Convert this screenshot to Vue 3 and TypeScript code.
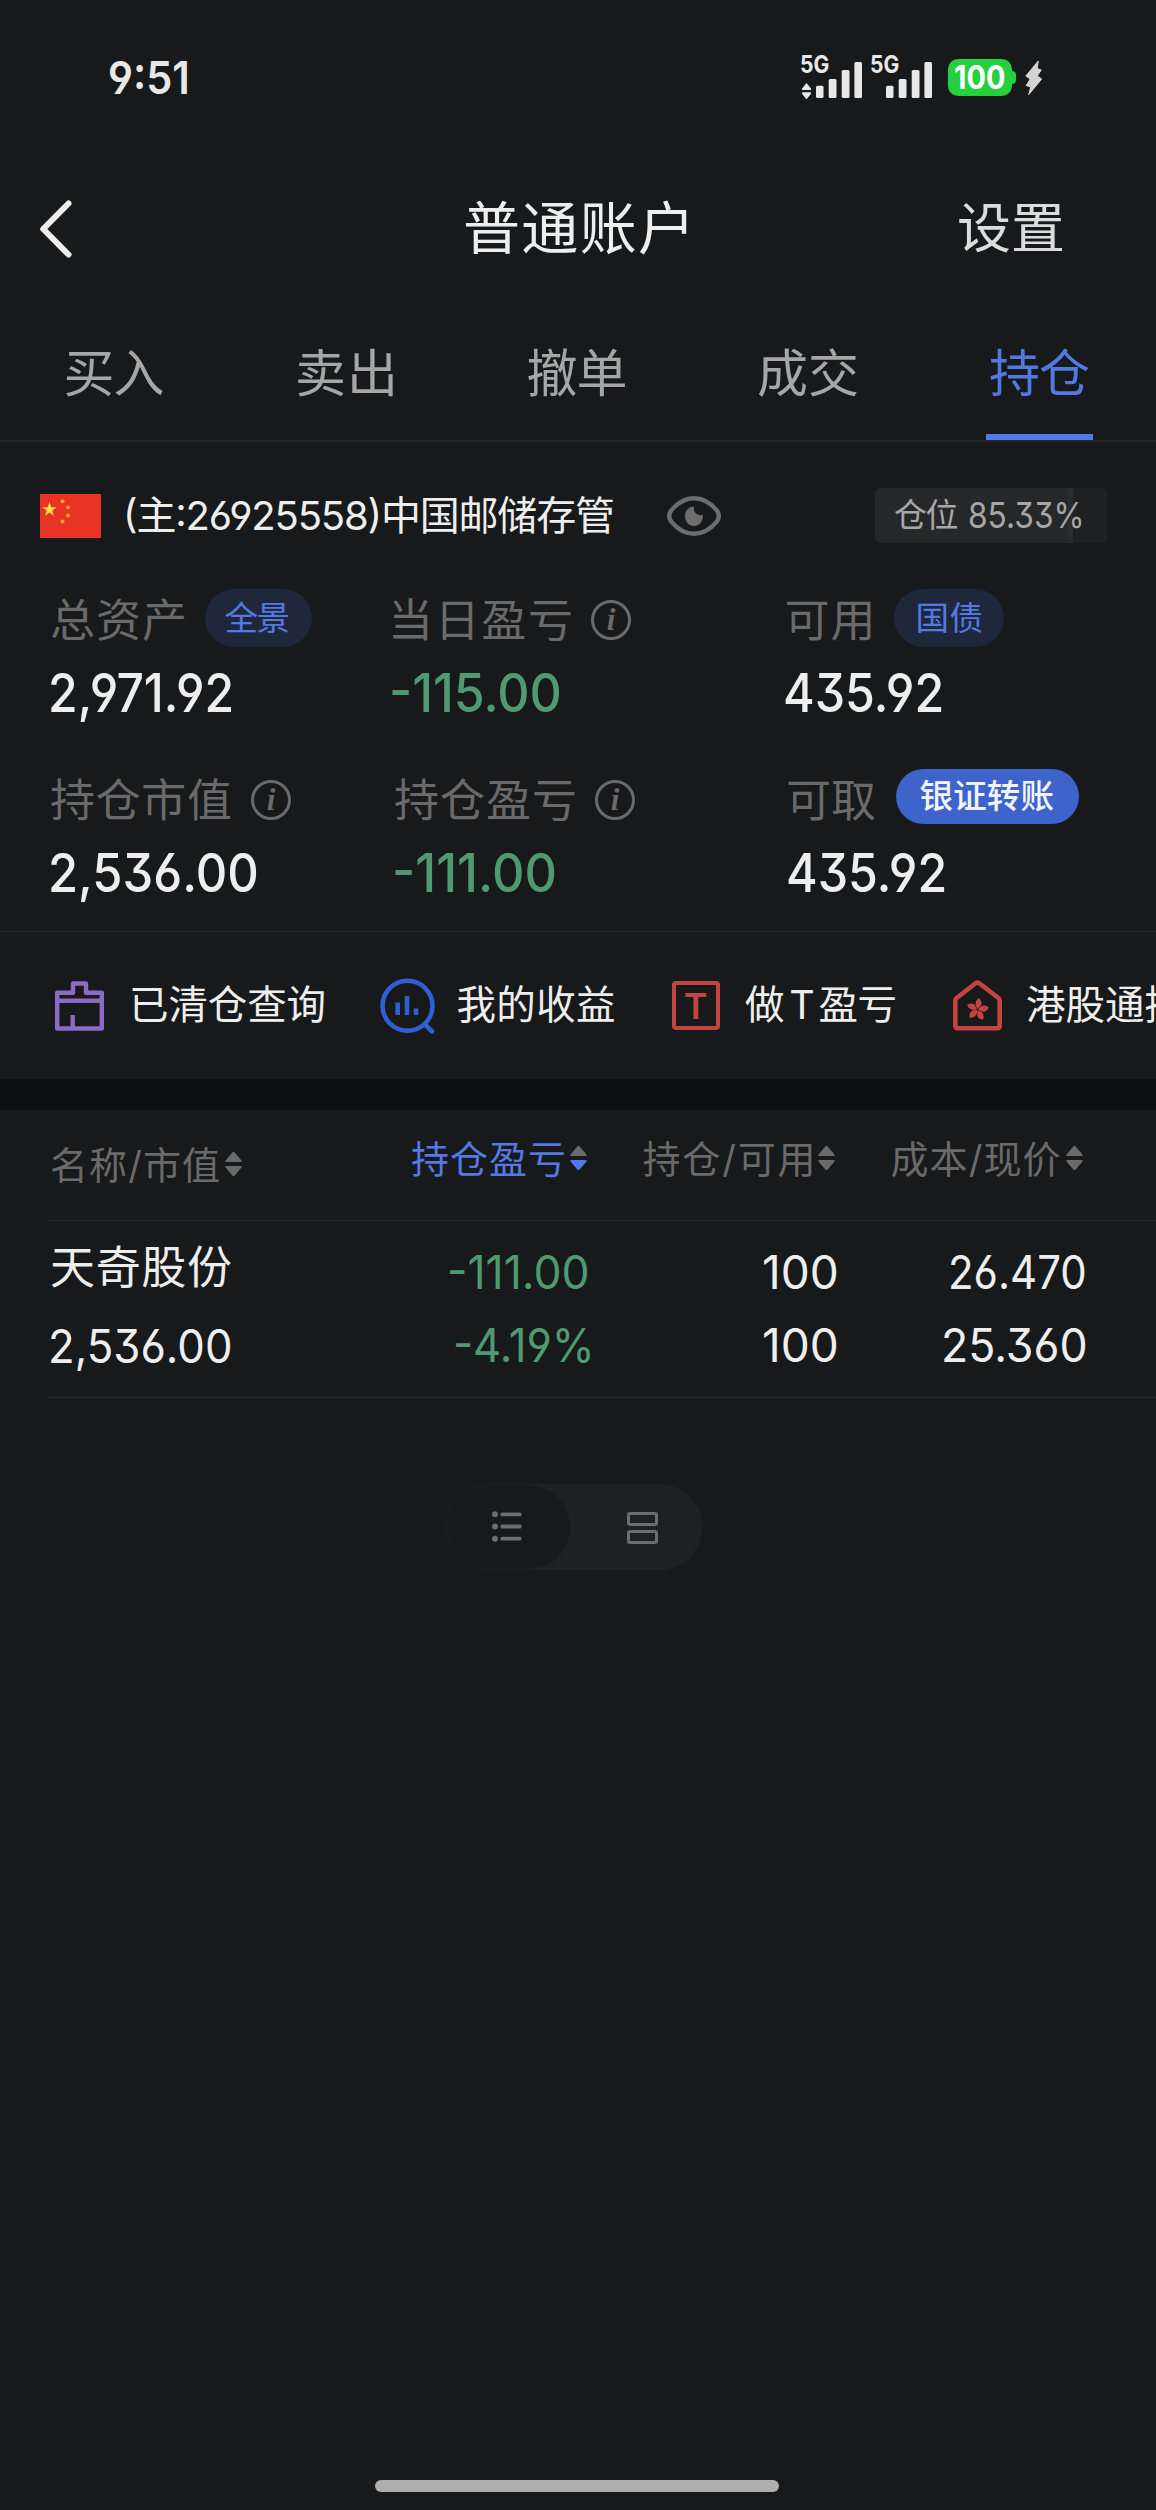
<script setup lang="ts">
import type { Directive } from 'vue'

// Tracks a label so that its visible glyphs span exactly the given width,
// and trims the side bearings so the box equals the visible glyphs.
// With the "squeeze" modifier the glyphs are narrowed instead of being tracked.
const ctx = document.createElement('canvas').getContext('2d')!
const vFit: Directive<HTMLElement, number, 'squeeze'> = {
  mounted(el, { value, modifiers }) {
    const text = el.textContent ?? ''
    const chars = Array.from(text)
    const cs = getComputedStyle(el)
    ctx.font = `${cs.fontStyle} ${cs.fontWeight} ${cs.fontSize} ${cs.fontFamily}`
    const lsb = -ctx.measureText(chars[0]).actualBoundingBoxLeft
    const last = ctx.measureText(chars[chars.length - 1])
    const rsb = last.width - last.actualBoundingBoxRight
    const advance = el.getBoundingClientRect().width
    const ink = advance - lsb - rsb
    if (modifiers.squeeze) {
      const k = value / ink
      el.style.transformOrigin = '0 50%'
      el.style.transform = `scaleX(${k})`
      el.style.marginLeft = `${-lsb * k}px`
      el.style.marginRight = `${value - advance + lsb * k}px`
      return
    }
    const gap = (value - ink) / Math.max(1, chars.length - 1)
    el.style.letterSpacing = `${gap}px`
    el.style.marginLeft = `${-lsb}px`
    el.style.marginRight = `${-(rsb + gap)}px`
  },
}

interface Cell {
  label: string
  labelWidth: number
  value: string
  valueWidth: number
  down?: boolean
  info?: boolean
  pill?: { text: string; width: number; kind: string }
}

const tabs = [
  { text: '买入', width: 98 },
  { text: '卖出', width: 95 },
  { text: '撤单', width: 98 },
  { text: '成交', width: 99 },
  { text: '持仓', width: 99, active: true },
]

const summary: Cell[][] = [
  [
    { label: '总资产', labelWidth: 133, value: '2,971.92', valueWidth: 181, pill: { text: '全景', width: 64, kind: 'first' } },
    { label: '当日盈亏', labelWidth: 178, value: '-115.00', valueWidth: 168, down: true, info: true },
    { label: '可用', labelWidth: 84, value: '435.92', valueWidth: 157, pill: { text: '国债', width: 64, kind: 'bond' } },
  ],
  [
    { label: '持仓市值', labelWidth: 180, value: '2,536.00', valueWidth: 206, info: true },
    { label: '持仓盈亏', labelWidth: 180, value: '-111.00', valueWidth: 160, down: true, info: true },
    { label: '可取', labelWidth: 87, value: '435.92', valueWidth: 157, pill: { text: '银证转账', width: 133, kind: 'solid' } },
  ],
]

const columns = [
  { key: 'name', text: '名称/市值', width: 168 },
  { key: 'profit', text: '持仓盈亏', width: 152, active: true },
  { key: 'amount', text: '持仓/可用', width: 168 },
  { key: 'price', text: '成本/现价', width: 168 },
]

const holding = [
  { key: 'profit', top: '-111.00', topWidth: 137.5, bottom: '-4.19%', bottomWidth: 134.5 },
  { key: 'amount', top: '100', topWidth: 72.5, bottom: '100', bottomWidth: 72.5 },
  { key: 'price', top: '26.470', topWidth: 134, bottom: '25.360', bottomWidth: 141.5 },
]
</script>

<template>
  <div class="screen">
    <div class="status">
      <span v-fit.squeeze="77" class="time">9:51</span>
      <div class="signal first">
        <span v-fit.squeeze="27.5" class="net">5G</span>
        <svg width="62" height="42" viewBox="0 0 62 42" fill="#e8e8e8">
          <path d="M6.500 26l4.500 5.500q.5 1.500-1 1.500h-7q-1.500 0-1-1.500zM6.500 42.300l4.500-5.500q.5-1.500-1-1.500h-7q-1.500 0-1 1.500z" />
          <rect x="16" y="28.700" width="7.500" height="12.300" rx="1.500" />
          <rect x="28.700" y="22" width="7.800" height="19" rx="1.500" />
          <rect x="41.700" y="13" width="7.800" height="28" rx="1.500" />
          <rect x="54.400" y="5" width="7.600" height="36" rx="1.500" />
        </svg>
      </div>
      <div class="signal">
        <span v-fit.squeeze="27.5" class="net">5G</span>
        <svg width="62" height="42" viewBox="0 0 62 42" fill="#e8e8e8">
          <rect x="16" y="28.700" width="7.500" height="12.300" rx="1.500" />
          <rect x="28.700" y="22" width="7.800" height="19" rx="1.500" />
          <rect x="41.700" y="13" width="7.800" height="28" rx="1.500" />
          <rect x="54.400" y="5" width="7.600" height="36" rx="1.500" />
        </svg>
      </div>
      <div class="battery"><span v-fit.squeeze="50">100</span></div>
      <i class="nub"></i>
      <svg class="bolt" width="18" height="36" viewBox="0 0 18 36" fill="#d4d4d4" stroke="#d4d4d4" stroke-width="1" stroke-linejoin="round">
        <path d="M13.300 1L.8 16l4.400 3L1.200 25.500l4.500 1.500L3.700 34.700 16.700 19l-4.500-3L16.200 10l-4-1.500z" />
      </svg>
    </div>

    <header class="bar">
      <svg width="34" height="60" viewBox="0 0 34 60" fill="none" stroke="#eeeeee" stroke-width="6" stroke-linecap="round" stroke-linejoin="round">
        <path d="M28.500 4.500L3.200 30 28.500 55.500" />
      </svg>
      <span v-fit="222" class="title">普通账户</span>
      <span v-fit="104" class="settings">设置</span>
    </header>

    <nav class="tabs">
      <div v-for="t in tabs" :key="t.text" class="tab" :class="{ active: t.active }">
        <span v-fit="t.width">{{ t.text }}</span>
      </div>
    </nav>

    <section class="account">
      <svg class="flag" width="61" height="44" viewBox="0 0 61 44">
        <rect width="61" height="44" fill="#e93324" />
        <path fill="#f6e24b" d="M9.500 8l1.700 5.200h5.400l-4.400 3.200 1.700 5.300-4.400-3.300-4.400 3.300 1.700-5.300-4.400-3.200h5.400z" />
        <g fill="#f0a63a"><circle cx="22.500" cy="7.300" r="2" /><circle cx="28" cy="13.300" r="1.900" /><circle cx="28" cy="21.500" r="1.900" /><circle cx="22.500" cy="27.500" r="2" /></g>
      </svg>
      <span v-fit="486" class="number">(主:26925558)中国邮储存管</span>
      <svg class="eye" width="54" height="40" viewBox="0 0 54 40">
        <path d="M27 2.200C16.500 2.200 9.500 8 4.200 14.300Q.2 20 4.200 25.700C9.500 32 16.500 37.800 27 37.800S44.500 32 49.800 25.700Q53.800 20 49.800 14.300C44.500 8 37.500 2.200 27 2.200z" fill="none" stroke="#6d6d6d" stroke-width="4.400" />
        <path d="M27 10.500c-1 6 3 9.500 9 8.500 0 6.500-3.500 11-9 11s-9-4.500-9-10 4-9.500 9-9.500z" fill="#6d6d6d" />
      </svg>
      <div class="ratio"><span v-fit="62.5" class="ratio-label">仓位</span><span v-fit.squeeze="111.5">85.33%</span></div>
    </section>

    <section class="summary">
      <div v-for="(row, r) in summary" :key="r" class="sum-row" :class="'r' + r">
        <div v-for="c in row" :key="c.label" class="cell">
          <div class="cell-head">
            <span v-fit="c.labelWidth" class="label">{{ c.label }}</span>
            <i v-if="c.info" class="info">i</i>
            <span v-if="c.pill" class="pill" :class="c.pill.kind"><span v-fit="c.pill.width">{{ c.pill.text }}</span></span>
          </div>
          <div class="value" :class="{ down: c.down }"><span v-fit.squeeze="c.valueWidth">{{ c.value }}</span></div>
        </div>
      </div>
    </section>

    <section class="quick">
      <svg width="49" height="50" viewBox="0 0 49 50" fill="none" stroke="#8a6bc8" stroke-width="4.400" stroke-linejoin="round">
        <path d="M2.200 11.700H18V2.500h13v9.200h15.800V47.500H2.200zM2.200 19.800h44.600M17.700 34v13" />
      </svg>
      <span v-fit="192.5" class="q1">已清仓查询</span>
      <svg class="i2" width="56" height="56" viewBox="0 0 56 56" fill="none" stroke="#2f5fd0" stroke-width="4.600">
        <circle cx="27.500" cy="27.700" r="25" />
        <path d="M45.500 47l6.500 6.500" stroke-linecap="round" />
        <path d="M17.700 24.500V37M27 18v19M36 30.500V37" />
      </svg>
      <span v-fit="156.5" class="q2">我的收益</span>
      <div class="t-box">T</div>
      <span class="q3"><span v-fit="36">做</span><span v-fit="23" class="tee">T</span><span v-fit="76">盈亏</span></span>
      <svg class="i4" width="49" height="51" viewBox="0 0 49 51" fill="none" stroke="#c4453f" stroke-width="4.600" stroke-linejoin="round">
        <path d="M2.300 20.500Q2.300 19 3.600 18L22.600 3.300Q24.500 1.800 26.400 3.300L45.400 18Q46.700 19 46.700 20.500V45.500Q46.700 48.200 44 48.200H5Q2.300 48.200 2.300 45.500z" />
        <g fill="#c4453f" stroke="none" transform="translate(24.500 29.500)">
          <path v-for="n in 5" :key="n" :transform="`rotate(${n * 72 - 62})`" d="M0-.5C-3.500-3.500-4.300-8-.5-11.500 .5-10.300 3.200-9 3-6 2.800-3.500 1-2.800 0-.5z" />
        </g>
      </svg>
      <span v-fit="196" class="q4">港股通持仓</span>
    </section>

    <div class="band"></div>

    <section class="table">
      <div class="thead">
        <div v-for="c in columns" :key="c.key" class="th" :class="[c.key, { active: c.active }]">
          <span v-fit="c.width">{{ c.text }}</span>
          <svg width="17" height="26" viewBox="0 0 17 26">
            <path class="up" d="M7.300 1.500q1.200-1.500 2.400 0l6.800 8q.8 1.500-.8 1.500H1.300q-1.600 0-.8-1.500z" />
            <path class="dn" d="M7.300 24.500q1.200 1.500 2.400 0l6.800-8q.8-1.500-.8-1.500H1.300q-1.600 0-.8 1.500z" />
          </svg>
        </div>
      </div>
      <div class="trow">
        <div class="td name">
          <div class="top"><span v-fit="180">天奇股份</span></div>
          <div class="bottom"><span v-fit.squeeze="179.5">2,536.00</span></div>
        </div>
        <div v-for="h in holding" :key="h.key" class="td" :class="h.key">
          <div class="top"><span v-fit.squeeze="h.topWidth">{{ h.top }}</span></div>
          <div class="bottom"><span v-fit.squeeze="h.bottomWidth">{{ h.bottom }}</span></div>
        </div>
      </div>
    </section>

    <div class="toggle">
      <div class="opt on">
        <svg width="30" height="31" viewBox="0 0 30 31" fill="#6d6d6d">
          <circle cx="3" cy="3.200" r="3" /><circle cx="3" cy="15.500" r="3" /><circle cx="3" cy="27.800" r="3" />
          <rect x="8.500" y="1.400" width="21" height="3.800" rx="1.500" /><rect x="8.500" y="13.600" width="21" height="3.800" rx="1.500" /><rect x="8.500" y="25.800" width="21" height="3.800" rx="1.500" />
        </svg>
      </div>
      <div class="opt">
        <svg width="31" height="32" viewBox="0 0 31 32" fill="none" stroke="#6d6d6d" stroke-width="3">
          <rect x="1.500" y="1.500" width="28" height="11" rx="1.500" /><rect x="1.500" y="19.500" width="28" height="11" rx="1.500" />
        </svg>
      </div>
    </div>

    <div class="home"></div>
  </div>
</template>

<style>
body {
  background: #17191a;
  overflow: hidden;
}
</style>

<style scoped>
.screen {
  box-sizing: border-box;
  width: 1156px;
  height: 2510px;
  overflow: hidden;
  display: flex;
  flex-direction: column;
  background: #17191a;
  color: #eeeeee;
  font-family: 'Inter', 'Noto Sans CJK SC', sans-serif;
  font-feature-settings: 'cv03', 'cv04', 'cv09', 'case';
  line-height: 1;
  white-space: nowrap;
}
.screen > * { flex: none; }
span { display: inline-block; flex: none; }
svg { display: block; flex: none; }

.status { display: flex; align-items: center; height: 154px; padding-left: 110px; box-sizing: border-box; padding-top: 1px; }
.time { font-size: 45.500px; font-weight: 600; color: #e8e8e8; }
.signal { display: grid; width: 62px; height: 42px; margin-left: 8px; }
.signal.first { margin-left: 613px; }
.signal > * { grid-area: 1 / 1; }
.net { justify-self: start; font-size: 24px; font-weight: 700; color: #e8e8e8; margin-top: -4px; position: relative; left: 1px; }
.battery { display: flex; align-items: center; justify-content: center; width: 64px; height: 37px; margin-left: 16px; border-radius: 10px; background: #25cf3e; color: #fff; font-size: 32px; font-weight: 700; }
.nub { width: 4px; height: 13px; border-radius: 0 5px 5px 0; background: #25cf3e; }
.bolt { margin-left: 8.500px; }

.bar { display: flex; align-items: center; height: 146px; padding-left: 40px; }
.bar svg { margin-top: 3px; }
.title { font-size: 57px; position: relative; left: 391px; top: 1px; }
.settings { font-size: 54px; color: #dcdcdc; position: relative; left: 663px; top: 2px; }

.tabs { display: grid; grid-template-columns: repeat(5, 1fr); height: 140px; padding-right: 1px; border-bottom: 2px solid #262729; font-size: 51px; color: #a6a6a6; }
.tab { display: grid; grid-template: 134px 6px / 100%; align-items: center; justify-items: center; padding-right: 2px; }
.tab span { margin-top: 13px; }
.tab.active { padding-right: 0; color: #5079e4; }
.tab.active::after { content: ''; width: 107px; height: 6px; background: #5079ea; }

.account { display: flex; align-items: center; height: 147px; padding-left: 40px; }
.number { font-size: 40px; }
.flag { margin-right: 26px; }
.eye { margin: 0 154.500px 0 53.500px; }
.ratio { display: flex; align-items: center; box-sizing: border-box; width: 232px; height: 55px; border-radius: 6px; padding-left: 20px; gap: 12.500px; background: linear-gradient(90deg, #262729 0 193px, #2a2b2c 193px 198px, #1f2022 198px); color: #a6a6a6; font-size: 35.500px; }
.ratio-label { font-size: 33px; }

.summary { padding-left: 51px; height: 342px; border-bottom: 1px solid #262729; }
.sum-row { display: grid; }
.r0 { grid-template-columns: 342px 393.500px 1fr; margin-bottom: 30px; }
.r1 { grid-template-columns: 344px 393px 1fr; }
.cell-head { display: flex; align-items: center; height: 58px; }
.label { font-size: 45px; color: #6a6a6a; position: relative; top: 2.500px; }
.info { box-sizing: border-box; width: 40px; height: 40px; margin: 4px 0 0 20px; border: 3px solid #6a6a6a; border-radius: 50%; color: #6a6a6a; font: italic bold 31px/33px 'Liberation Serif', serif; text-align: center; }
.pill { display: flex; align-items: center; justify-content: center; box-sizing: border-box; width: 107px; height: 58px; margin-left: 21px; padding-right: 4px; border-radius: 29px; background: #1f273a; color: #5379e2; font-size: 33.500px; }
.pill > span { position: relative; top: 1px; }
.pill.bond { width: 110px; margin-left: 23px; padding: 0 0 0 2px; }
.pill.solid { width: 183px; height: 55px; margin: -3px 0 0 21px; padding-right: 1px; background: #3e63ca; color: #f2f5ff; font-weight: 500; }
.pill.solid > span { top: 0; }
.value { display: flex; align-items: center; height: 92px; font-size: 53px; font-weight: 500; }
.r0 .cell + .cell .value { margin-left: -1.500px; }
.down, .td.profit { color: #4f9a73; }

.quick { display: flex; align-items: center; height: 147px; padding-left: 55px; font-size: 39.500px; overflow: hidden; }
.quick > svg:first-child { margin-right: 28px; }
.quick > .i2 { margin: 0 22px 0 55px; }
.t-box { display: flex; flex: none; align-items: center; justify-content: center; box-sizing: border-box; width: 48px; height: 49px; margin: 0 25.500px 0 57.500px; border: 4.500px solid #c4453f; border-radius: 4px; color: #c4453f; font-size: 36px; font-weight: 600; }
.q3 { display: flex; width: 150.500px; justify-content: space-between; }
.quick > .i4 { margin: 0 25.500px 0 57px; }

.band { height: 31px; background: #0f1012; }

.thead { display: grid; grid-template-columns: 361px 231.500px 248px 1fr; align-items: center; height: 110px; margin-left: 51px; font-size: 38px; color: #6a6a6a; }
.th { display: flex; align-items: center; gap: 6px; padding-bottom: 12px; }
.th.name { padding: 0; }
.th svg { fill: #6a6a6a; margin-top: -2px; }
.th.active { color: #5379e2; }
.th.active .dn { fill: #4c79f0; }
.trow { display: grid; grid-template-columns: 300px 238px 247px 249px; height: 176px; margin-left: 49px; padding-left: 2px; border-top: 1px solid #28292b; border-bottom: 1px solid #28292b; font-size: 46.500px; }
.td { display: grid; grid-template-rows: 103px 43px; align-content: start; align-items: center; justify-items: end; }
.td.name { grid-template-rows: 92px 67px; justify-items: start; }
.td.name .top { font-size: 45px; }
.td.profit .top { padding-right: 2px; }
.td.profit .bottom { margin-right: -1.500px; }

.toggle { display: flex; box-sizing: border-box; width: 257px; height: 86px; margin: 86px 0 0 446px; border: 1px solid #1f2021; border-radius: 43px; background: #1f2021; }
.opt { display: flex; align-items: center; justify-content: center; width: 123px; height: 84px; border-radius: 42px; }
.opt.on { background: #17191a; }
.opt:last-child { width: 132px; padding-left: 12px; box-sizing: border-box; }
.opt.on svg { margin: -2px 0 0 -4px; }
.opt:last-child svg { margin-top: 2px; }

.home { width: 404px; height: 12px; margin: auto 0 18px 375px; border-radius: 6px; background: #aeaeae; }
</style>
